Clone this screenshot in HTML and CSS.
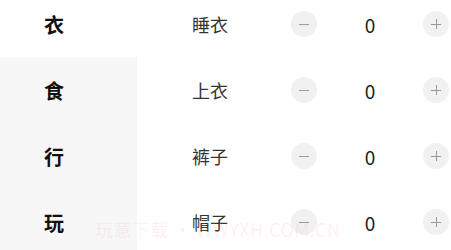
FILE: index.html
```html
<!DOCTYPE html>
<html lang="zh-CN">
<head>
<meta charset="utf-8">
<link rel="stylesheet" href="styles.css">
</head>
<body>
<div class="page">
  <div class="nav">
    <div class="nav-item active">衣</div>
    <div class="nav-item">食</div>
    <div class="nav-item">行</div>
    <div class="nav-item">玩</div>
  </div>
  <div class="list">
    <div class="row">
      <div class="name">睡衣</div>
      <div class="btn minus"></div>
      <div class="count">0</div>
      <div class="btn plus"></div>
    </div>
    <div class="row">
      <div class="name">上衣</div>
      <div class="btn minus"></div>
      <div class="count">0</div>
      <div class="btn plus"></div>
    </div>
    <div class="row">
      <div class="name">裤子</div>
      <div class="btn minus"></div>
      <div class="count">0</div>
      <div class="btn plus"></div>
    </div>
    <div class="row">
      <div class="name">帽子</div>
      <div class="btn minus"></div>
      <div class="count">0</div>
      <div class="btn plus"></div>
    </div>
  </div>
  <div class="watermark">玩意下载 • WWYXH.COM.CN</div>
</div>
</body>
</html>
```
FILE: styles.css
```css
html, body {
  margin: 0;
  padding: 0;
  background: #fff;
  overflow: hidden;
}
body {
  font-family: "Noto Sans CJK SC", "Noto Sans", sans-serif;
  width: 451px;
  height: 250px;
}
.page {
  position: relative;
  display: flex;
  margin-top: -9px;
}
.nav {
  width: 137px;
  background: #f7f7f7;
  display: flex;
  flex-direction: column;
}
.nav-item {
  height: 66px;
  display: flex;
  align-items: center;
  padding-left: 44px;
  font-size: 20px;
  font-weight: bold;
  color: #111;
}
.nav-item.active {
  background: #fff;
}
.list {
  flex: 1;
  display: flex;
  flex-direction: column;
}
.row {
  height: 66px;
  display: flex;
  align-items: center;
  padding-left: 55px;
}
.name {
  width: 99px;
  font-size: 18px;
  color: #333;
}
.count {
  width: 106px;
  text-align: center;
  font-size: 19px;
  color: #222;
}
.btn {
  position: relative;
  width: 26px;
  height: 26px;
  border-radius: 50%;
  background: #f1f1f1;
}
.btn::before,
.plus::after {
  content: "";
  position: absolute;
  left: 8px;
  top: 12.5px;
  width: 10px;
  height: 1px;
  background: #9a9a9a;
}
.plus::after {
  left: 12.5px;
  top: 8px;
  width: 1px;
  height: 10px;
}
.watermark {
  position: absolute;
  left: 95px;
  top: 225px;
  font-size: 18px;
  color: rgba(245, 160, 200, 0.18);
  white-space: nowrap;
  letter-spacing: 0.5px;
}
```
